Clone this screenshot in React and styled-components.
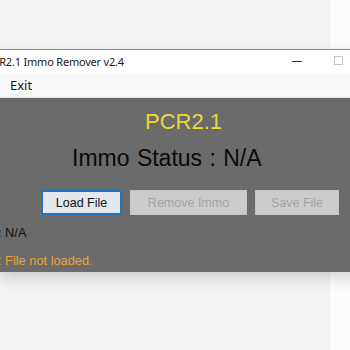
import React from "react";
import styled, { createGlobalStyle } from "styled-components";

const GlobalStyle = createGlobalStyle`
  html, body { margin: 0; padding: 0; }
  body {
    width: 350px;
    height: 350px;
    overflow: hidden;
    background: linear-gradient(to right, #f3f3f3 0, #f3f3f3 330px, #fcfcfc 330px);
  }
`;

const Page = styled.div`
  width: 350px;
  height: 350px;
  overflow: hidden;
  padding-top: 49px;
  box-sizing: border-box;
`;

const Window = styled.div`
  margin-right: -40px;
  border-top: 1px solid #8a8a8a;
  box-shadow: 0 6px 14px rgba(0, 0, 0, 0.16);
`;

const TitleBar = styled.div`
  height: 23px;
  background: #ffffff;
  display: flex;
  align-items: center;
  font-family: "Noto Sans", "Open Sans", sans-serif;
  font-size: 11px;
  letter-spacing: -0.2px;
  color: #1a1a1a;
`;

const TitleText = styled.span`
  margin-left: -14px;
  white-space: nowrap;
`;

const Controls = styled.div`
  margin-left: auto;
  display: flex;
  align-items: center;
  gap: 32px;
  margin-right: 47px;
`;

const Minimize = styled.span`
  width: 10px;
  height: 1px;
  background: #333;
`;

const Maximize = styled.span`
  width: 7px;
  height: 7px;
  border: 1px solid #c8c8c8;
  margin-top: -2px;
`;

const MenuBar = styled.div`
  height: 24px;
  background: #f9f9f9;
  display: flex;
  align-items: center;
  padding-left: 10px;
  font-family: "Noto Sans", "Open Sans", sans-serif;
  font-size: 13px;
  color: #111;
  border-bottom: 1px solid #e2e2e2;
`;

const Panel = styled.div`
  height: 174px;
  background: #6b6b6b;
  display: flex;
  flex-direction: column;
  font-family: "Liberation Sans", Arial, sans-serif;
  box-sizing: border-box;
  padding-top: 11px;
`;

const Heading = styled.div`
  margin-left: ${(p) => p.$left}px;
  margin-top: ${(p) => p.$mt || 0}px;
  font-size: ${(p) => p.$size}px;
  color: ${(p) => p.$color};
  line-height: ${(p) => p.$lh}px;
  white-space: nowrap;
  word-spacing: ${(p) => p.$ws || 0}px;
`;

const ButtonRow = styled.div`
  display: flex;
  margin-left: 41px;
  margin-top: 17px;
  gap: 8px;
`;

const Button = styled.div`
  width: ${(p) => p.$w}px;
  height: 25px;
  box-sizing: border-box;
  display: flex;
  align-items: center;
  justify-content: center;
  font-size: 12.5px;
  background: ${(p) => (p.$active ? "#e3e8ee" : "#cccccc")};
  color: ${(p) => (p.$active ? "#111" : "#a3a3a3")};
  border: ${(p) => (p.$active ? "2px solid #1f74c4" : "1px solid #c4c4c4")};
`;

const InfoLine = styled.div`
  margin-left: -2px;
  font-size: 12.8px;
  color: ${(p) => p.$color};
  line-height: 14px;
  margin-top: ${(p) => p.$mt}px;
  white-space: nowrap;
`;

export default function App() {
  return (
    <>
      <GlobalStyle />
      <Page>
        <Window>
          <TitleBar>
            <TitleText>PCR2.1 Immo Remover v2.4</TitleText>
            <Controls>
              <Minimize />
              <Maximize />
            </Controls>
          </TitleBar>
          <MenuBar>Exit</MenuBar>
          <Panel>
            <Heading $left={145} $size={22} $color="#ecd735" $lh={26}>
              PCR2.1
            </Heading>
            <Heading $left={72} $mt={8} $size={23} $color="#0a0a0a" $lh={30} $ws={1}>
              Immo Status : N/A
            </Heading>
            <ButtonRow>
              <Button $w={81} $active>Load File</Button>
              <Button $w={117}>Remove Immo</Button>
              <Button $w={84}>Save File</Button>
            </ButtonRow>
            <InfoLine $color="#111" $mt={11}>: N/A</InfoLine>
            <InfoLine $color="#e9a53a" $mt={14}>: File not loaded.</InfoLine>
          </Panel>
        </Window>
      </Page>
    </>
  );
}
